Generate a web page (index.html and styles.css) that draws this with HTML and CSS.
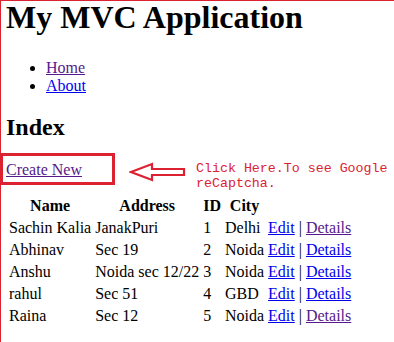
FILE: index.html
```
<!DOCTYPE html>
<html lang="en">
<head>
    <meta charset="UTF-8">
    <meta name="viewport" content="width=device-width, initial-scale=1.0">
    <title>Index - My MVC Application</title>
    <link rel="stylesheet" href="styles.css">
</head>
<body>
    <div class="page">
        <h1>My MVC Application</h1>

        <ul class="menu">
            <li><a href="/" class="visited">Home</a></li>
            <li><a href="/Home/About">About</a></li>
        </ul>

        <h2>Index</h2>

        <div class="create-row">
            <div class="create-box">
                <a href="/Employee/Create" class="visited">Create New</a>
            </div>
            <svg class="arrow" width="58" height="20" viewBox="0 0 58 20">
                <path d="M2 10 L23 2 L23 7 L55 7 L55 13 L23 13 L23 18 Z" fill="none" stroke="#dc2230" stroke-width="2.2" stroke-linejoin="miter"/>
            </svg>
            <div class="note">Click Here.To see Google<br>reCaptcha.</div>
        </div>

        <table class="grid">
            <tr>
                <th>Name</th>
                <th>Address</th>
                <th>ID</th>
                <th>City</th>
                <th></th>
            </tr>
            <tr>
                <td>Sachin Kalia</td>
                <td>JanakPuri</td>
                <td>1</td>
                <td>Delhi</td>
                <td><a href="/Employee/Edit/1">Edit</a> | <a href="/Employee/Details/1" class="visited">Details</a></td>
            </tr>
            <tr>
                <td>Abhinav</td>
                <td>Sec 19</td>
                <td>2</td>
                <td>Noida</td>
                <td><a href="/Employee/Edit/2">Edit</a> | <a href="/Employee/Details/2">Details</a></td>
            </tr>
            <tr>
                <td>Anshu</td>
                <td>Noida sec 12/22</td>
                <td>3</td>
                <td>Noida</td>
                <td><a href="/Employee/Edit/3">Edit</a> | <a href="/Employee/Details/3">Details</a></td>
            </tr>
            <tr>
                <td>rahul</td>
                <td>Sec 51</td>
                <td>4</td>
                <td>GBD</td>
                <td><a href="/Employee/Edit/4">Edit</a> | <a href="/Employee/Details/4">Details</a></td>
            </tr>
            <tr>
                <td>Raina</td>
                <td>Sec 12</td>
                <td>5</td>
                <td>Noida</td>
                <td><a href="/Employee/Edit/5">Edit</a> | <a href="/Employee/Details/5" class="visited">Details</a></td>
            </tr>
        </table>
    </div>
</body>
</html>
```

FILE: styles.css
```
body {
    margin: 0;
    font-family: 'Liberation Serif', 'Times New Roman', serif;
    font-size: 16px;
    color: #000;
    background-color: #fff;
}

.page {
    min-height: 342px;
    box-sizing: border-box;
    border-top: 1px solid #dc2230;
    border-left: 1px solid #dc2230;
    padding-left: 5px;
}

a {
    color: #0000ee;
}

a.visited {
    color: #551a8b;
}

h1 {
    margin: 1px 0 0;
    font-size: 32px;
    line-height: 30px;
}

.menu {
    margin: 27px 0 16px;
    padding-left: 40px;
}

h2 {
    font-size: 24px;
    margin: 19px 0 0;
}

.create-row {
    display: flex;
    align-items: flex-start;
    margin: 12px 0 0 -6px;
}

.create-box {
    width: 115px;
    box-sizing: border-box;
    border: 3px solid #dc2230;
    padding: 5px 0 3px 3px;
}

.arrow {
    margin: 9px 0 0 14px;
}

.note {
    margin: 8px 0 0 9px;
    font-family: 'Liberation Mono', 'Courier New', monospace;
    font-size: 13.3px;
    line-height: 15px;
    color: #dc2230;
}

.grid {
    margin-top: 3px;
}

.grid th {
    font-weight: bold;
}
```
